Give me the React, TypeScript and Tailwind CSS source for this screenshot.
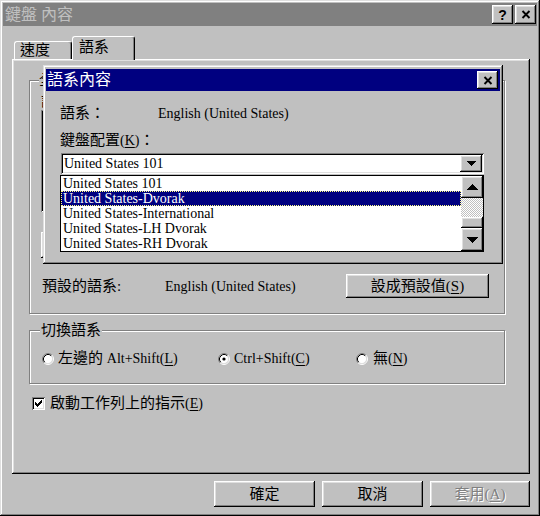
import React from "react";

const raised =
  "shadow-[inset_-1px_-1px_#000,inset_1px_1px_#fff,inset_-2px_-2px_#808080,inset_2px_2px_#dfdfdf]";
const windowEdge =
  "shadow-[inset_-1px_-1px_#000,inset_1px_1px_#dfdfdf,inset_-2px_-2px_#808080,inset_2px_2px_#fff]";
const sunken =
  "shadow-[inset_1px_1px_#808080,inset_-1px_-1px_#fff,inset_2px_2px_#000,inset_-2px_-2px_#dfdfdf]";
const etched = "border border-[#808080] shadow-[1px_1px_0_#fff,inset_1px_1px_0_#fff]";

function U({ c }: { c: string }) {
  return <span className="underline underline-offset-2">{c}</span>;
}

function XIcon() {
  return (
    <svg width="10" height="9" viewBox="0 0 10 9">
      <path d="M1.5 1 L8.5 8 M8.5 1 L1.5 8" stroke="#000" strokeWidth="1.9" />
    </svg>
  );
}

function DownArrow({ w = 9 }: { w?: number }) {
  const h = Math.ceil(w / 2);
  return (
    <svg width={w} height={h} viewBox={`0 0 ${w} ${h}`} shapeRendering="crispEdges">
      <path d={`M0 0H${w}L${w / 2} ${h}Z`} fill="#000" />
    </svg>
  );
}

function UpArrow({ w = 9 }: { w?: number }) {
  const h = Math.ceil(w / 2);
  return (
    <svg width={w} height={h} viewBox={`0 0 ${w} ${h}`} shapeRendering="crispEdges">
      <path d={`M0 ${h}H${w}L${w / 2} 0Z`} fill="#000" />
    </svg>
  );
}

function Radio({ checked }: { checked?: boolean }) {
  return (
    <svg width="12" height="12" viewBox="0 0 12 12" className="shrink-0">
      <circle cx="6" cy="6" r="4.5" fill="#fff" />
      <path d="M9.89 2.11 A5.5 5.5 0 0 0 2.11 9.89" stroke="#808080" fill="none" />
      <path d="M2.11 9.89 A5.5 5.5 0 0 0 9.89 2.11" stroke="#fff" fill="none" />
      <path d="M9.18 2.82 A4.5 4.5 0 0 0 2.82 9.18" stroke="#000" fill="none" />
      <path d="M2.82 9.18 A4.5 4.5 0 0 0 9.18 2.82" stroke="#dfdfdf" fill="none" />
      {checked && <circle cx="6" cy="6" r="1.6" fill="#000" />}
    </svg>
  );
}

function Checkbox() {
  return (
    <div className={`w-[13px] h-[13px] bg-white ${sunken} flex items-center justify-center shrink-0`}>
      <svg width="7" height="7" viewBox="0 0 7 7" shapeRendering="crispEdges">
        <path
          d="M6 0h1v1h-1z M5 1h2v1h-2z M0 2h1v1h-1z M4 2h3v1h-3z M0 3h2v1h-2z M3 3h3v1h-3z M0 4h5v1h-5z M1 5h3v1h-3z M2 6h1v1h-1z"
          fill="#000"
        />
      </svg>
    </div>
  );
}

function Btn({
  children,
  className = "",
}: {
  children?: React.ReactNode;
  className?: string;
}) {
  return (
    <div className={`bg-[#c0c0c0] ${raised} flex items-center justify-center ${className}`}>
      {children}
    </div>
  );
}

export default function App() {
  return (
    <div
      className={`relative w-[540px] h-[516px] bg-[#c0c0c0] ${windowEdge} p-[3px] flex flex-col overflow-hidden text-[15px] text-black font-['Liberation_Serif','Noto_Sans_CJK_TC',serif]`}
    >
      {/* title bar */}
      <div className="h-[23px] bg-[#808080] flex items-center pl-[2px] pr-[1px] shrink-0">
        <span className="text-[#c0c0c0] text-[16px] leading-[23px]">鍵盤 內容</span>
        <div className="ml-auto flex gap-[2px]">
          <Btn className="w-[21px] h-[19px]">
            <span className="font-['Liberation_Sans',sans-serif] font-bold text-[14px] leading-none pt-[1px]">?</span>
          </Btn>
          <Btn className="w-[21px] h-[19px]">
            <XIcon />
          </Btn>
        </div>
      </div>

      {/* tabs */}
      <div className="relative z-10 flex h-[23px] mt-[10px] ml-[11px] shrink-0">
        <div className="mt-[5px] w-[58px] h-[18px] border-t border-l border-r border-white border-r-black rounded-t-[3px] shadow-[inset_-1px_0_#808080] flex items-center pl-[5px] leading-none">
          速度
        </div>
        <div className="w-[63px] h-[24px] bg-[#c0c0c0] border-t border-l border-r border-white border-r-black rounded-t-[3px] shadow-[inset_-1px_0_#808080] flex items-center pl-[6px] pb-[3px] leading-none">
          語系
        </div>
      </div>

      {/* tab panel */}
      <div className={`ml-[9px] w-[518px] h-[415px] shrink-0 ${raised} pt-[21px] pl-[17px] flex flex-col`}>
        {/* group 1 (mostly covered by dialog) */}
        <div className={`relative w-[476px] h-[234px] shrink-0 ${etched}`}>
          <span className="absolute -top-[10px] left-[9px] w-[4px] overflow-hidden whitespace-nowrap bg-[#c0c0c0] leading-[18px]">
            全
          </span>
          <div className="flex flex-col pl-[11px] pr-[15px]">
            <div className="mt-[12px] h-[17px] leading-[17px] w-[3px] overflow-hidden whitespace-nowrap">語</div>
            <div className={`h-[102px] bg-white ${sunken}`} />
            <div className="mt-[20px] h-[26px] flex gap-[8px]">
              <Btn className="w-[100px] h-[26px]" />
              <Btn className="w-[100px] h-[26px]" />
              <Btn className="w-[100px] h-[26px]" />
            </div>
            <div className="mt-[16px] h-[24px] flex items-center">
              <span className="w-[124px] pl-[1px]">預設的語系:</span>
              <span className="text-[14px]">English (United States)</span>
              <Btn className="ml-auto w-[143px] h-[24px]">
                設成預設值(<U c="S" />)
              </Btn>
            </div>
          </div>
        </div>

        {/* group 2 */}
        <div className={`relative mt-[16px] w-[476px] h-[54px] shrink-0 ${etched}`}>
          <span className="absolute -top-[10px] left-[10px] px-[1px] bg-[#c0c0c0] leading-[18px]">切換語系</span>
          <div className="mt-[19px] h-[17px] flex items-center pl-[12px]">
            <div className="w-[176px] flex items-center gap-[4px]">
              <Radio />
              <span>
                左邊的 <span className="text-[14px]">Alt+Shift(<U c="L" />)</span>
              </span>
            </div>
            <div className="w-[138px] flex items-center gap-[4px]">
              <Radio checked />
              <span className="text-[14px]">
                Ctrl+Shift(<U c="C" />)
              </span>
            </div>
            <div className="flex items-center gap-[5px]">
              <Radio />
              <span>
                無<span className="text-[14px]">(<U c="N" />)</span>
              </span>
            </div>
          </div>
        </div>

        {/* checkbox */}
        <div className="mt-[13px] ml-[3px] h-[13px] flex items-center gap-[5px]">
          <Checkbox />
          <span className="leading-[13px]">
            啟動工作列上的指示<span className="text-[14px]">(<U c="E" />)</span>
          </span>
        </div>
      </div>

      {/* bottom buttons */}
      <div className="mt-[7px] flex justify-end gap-[7px] pr-[7px] shrink-0">
        <Btn className="w-[101px] h-[26px]">確定</Btn>
        <Btn className="w-[101px] h-[26px]">取消</Btn>
        <Btn className="w-[100px] h-[26px]">
          <span className="text-[#808080] [text-shadow:1px_1px_#fff]">
            套用(<U c="A" />)
          </span>
        </Btn>
      </div>

      {/* overlay dialog */}
      <div
        className={`absolute left-[43px] top-[65px] z-20 w-[460px] h-[199px] bg-[#c0c0c0] ${windowEdge} pt-[4px] px-[3px] flex flex-col`}
      >
        <div className="h-[22px] bg-[#000080] flex items-center pl-[1px] pr-[2px] shrink-0">
          <span className="text-white text-[16px] leading-[22px]">語系內容</span>
          <Btn className="ml-auto w-[21px] h-[18px]">
            <XIcon />
          </Btn>
        </div>
        <div className="flex flex-col pl-[14px]">
          <div className="mt-[13px] h-[18px] flex items-center">
            <span className="w-[98px]">語系：</span>
            <span className="text-[14px]">English (United States)</span>
          </div>
          <div className="mt-[9px] h-[18px] flex items-center">
            <span>
              鍵盤配置<span className="text-[14px]">(<U c="K" />)</span>：
            </span>
          </div>
          <div className={`mt-[4px] ml-[1px] w-[423px] h-[21px] bg-white ${sunken} flex items-center p-[2px]`}>
            <span className="flex-1 pl-[1px] text-[14px] leading-[17px]">United States 101</span>
            <Btn className="w-[22px] h-[17px]">
              <DownArrow w={9} />
            </Btn>
          </div>
          <div className="mt-[1px] w-[424px] h-[77px] border border-black bg-white flex">
            <div className="flex-1 flex flex-col text-[14px]">
              <div className="h-[15px] leading-[15px] pl-[2px]">United States 101</div>
              <div className="h-[15px] leading-[15px] pl-[1px] bg-[#000080] text-white outline-1 outline-dotted outline-[#ffff80] -outline-offset-1">
                <span className="pl-[1px]">United States-Dvorak</span>
              </div>
              <div className="h-[15px] leading-[15px] pl-[2px]">United States-International</div>
              <div className="h-[15px] leading-[15px] pl-[2px]">United States-LH Dvorak</div>
              <div className="h-[15px] leading-[15px] pl-[2px]">United States-RH Dvorak</div>
            </div>
            <div className="w-[22px] flex flex-col">
              <Btn className="h-[22px]">
                <UpArrow w={11} />
              </Btn>
              <div className="h-[19px] bg-[image:repeating-conic-gradient(#c0c0c0_0_25%,#fff_0_50%)] bg-[length:2px_2px]" />
              <Btn className="h-[11px]" />
              <Btn className="h-[23px]">
                <DownArrow w={11} />
              </Btn>
            </div>
          </div>
        </div>
      </div>
    </div>
  );
}
